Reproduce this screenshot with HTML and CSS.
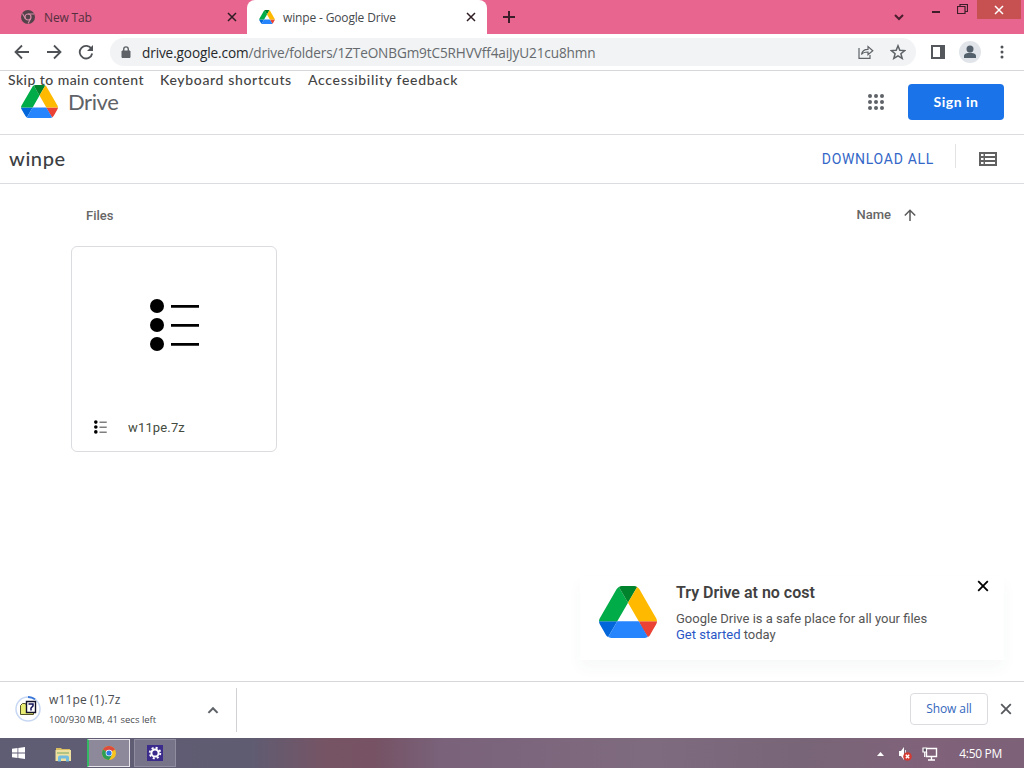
FILE: index.html
```
<!DOCTYPE html>
<html lang="en">
<head>
	<meta charset="UTF-8">
	<title>winpe - Google Drive</title>
	<link rel="stylesheet" href="styles.css">
</head>
<body>
	<svg class="defs" width="0" height="0">
		<symbol id="drive" viewBox="0 0 87.3 78">
			<path d="m6.6 66.85 3.85 6.65c.8 1.4 1.95 2.5 3.3 3.3l13.75-23.8h-27.5c0 1.55.4 3.1 1.2 4.5z" fill="#0066da"/>
			<path d="m43.65 25-13.75-23.8c-1.35.8-2.5 1.9-3.3 3.3l-25.4 44a9.06 9.06 0 0 0 -1.2 4.5h27.5z" fill="#00ac47"/>
			<path d="m73.55 76.8c1.35-.8 2.5-1.9 3.3-3.3l1.6-2.75 7.65-13.25c.8-1.4 1.2-2.95 1.2-4.5h-27.5l5.85 11.5z" fill="#ea4335"/>
			<path d="m43.65 25 13.75-23.8c-1.35-.8-2.9-1.2-4.5-1.2h-18.5c-1.6 0-3.15.45-4.5 1.2z" fill="#00832d"/>
			<path d="m59.8 53h-32.3l-13.75 23.8c1.35.8 2.9 1.2 4.5 1.2h50.8c1.6 0 3.15-.45 4.5-1.2z" fill="#2684fc"/>
			<path d="m73.4 26.5-12.7-22c-.8-1.4-1.95-2.5-3.3-3.3l-13.75 23.8 16.15 28h27.45c0-1.55-.4-3.1-1.2-4.5z" fill="#ffba00"/>
		</symbol>
		<symbol id="cross" viewBox="0 0 10 10">
			<path d="M1 1l8 8M9 1l-8 8" fill="none" stroke="currentColor" stroke-width="1.5"/>
		</symbol>
		<symbol id="list" viewBox="0 0 50 52">
			<circle cx="7" cy="7" r="7"/><circle cx="7" cy="26" r="7"/><circle cx="7" cy="45" r="7"/>
			<path d="M21 6h28v2.700H21zM21 25h28v2.700H21zM21 44h28v2.700H21z"/>
		</symbol>
	</svg>

	<div class="screen">
		<!-- tabs -->
		<div class="tabs">
			<div class="tab">
				<svg class="favicon" viewBox="0 0 14 14"><circle cx="7" cy="7" r="7" fill="#54424a"/><circle cx="7" cy="7" r="3" fill="#54424a" stroke="#d98aa6" stroke-width="1.200"/><path d="M7 4h6.300M4.300 8.500L1.500 3.500M9.700 8.500L7 13.500" stroke="#d98aa6" stroke-width="1.100"/></svg>
				<span class="tab-title">New Tab</span>
				<svg class="tab-close"><use href="#cross"/></svg>
			</div>
			<div class="tab active">
				<svg class="favicon"><use href="#drive"/></svg>
				<span class="tab-title">winpe - Google Drive</span>
				<svg class="tab-close"><use href="#cross"/></svg>
			</div>
			<svg class="plus" viewBox="0 0 12 12"><path d="M6 0v12M0 6h12" stroke="#3c1e2a" stroke-width="2"/></svg>
			<div class="win-btns">
				<svg class="win-down" viewBox="0 0 10 7"><path d="M1 1l4 4 4-4" fill="none" stroke="#4b1d2e" stroke-width="2"/></svg>
				<svg class="win-min" viewBox="0 0 8 2"><path d="M0 0h8v2H0z" fill="#3c1e2a"/></svg>
				<svg class="win-max" viewBox="0 0 11 10"><path d="M.5 2.500h7.500v7H.5zM3 2V.5h7.500V7.500H8.500" fill="none" stroke="#3c1e2a" stroke-width="1.200"/></svg>
				<div class="win-close"><svg width="10" height="10"><use href="#cross"/></svg></div>
			</div>
		</div>

		<!-- address bar -->
		<div class="toolbar">
			<svg class="nav" viewBox="0 0 16 16"><path d="M15 8H2M8 1.500L1.500 8 8 14.500"/></svg>
			<svg class="nav" viewBox="0 0 16 16"><path d="M1 8h13M8 1.500L14.500 8 8 14.500"/></svg>
			<svg class="nav" viewBox="0 0 16 16"><path d="M13.500 5A6.300 6.300 0 1 0 14.200 9.500"/><path d="M15 1v6H9z" class="fill"/></svg>
			<div class="omnibox">
				<svg class="lock" viewBox="0 0 10 12"><path d="M1 5h8v6.500H1z" fill="#5f6368" stroke="#5f6368"/><path d="M2.700 5V3.200a2.300 2.300 0 0 1 4.600 0V5" fill="none" stroke="#5f6368" stroke-width="1.400"/></svg>
				<span class="url"><b>drive.google.com</b>/drive/folders/1ZTeONBGm9tC5RHVVff4aiJyU21cu8hmn</span>
				<svg class="share" viewBox="0 0 16 14"><path d="M1 3v10.400h11V10M3.500 9.500C4 6 6.500 4.300 10 4.300V1.500l4.800 4.200L10 9.800V7C7 7 5 7.500 3.500 9.500z" fill="none" stroke="#5f6368" stroke-width="1.200"/></svg>
				<svg class="star" viewBox="0 0 16 16"><path d="M8 1.800l1.800 4.500 4.900.3-3.800 3.100 1.300 4.700L8 11.800l-4.200 2.600 1.300-4.700L1.300 6.600l4.900-.3z" fill="none" stroke="#5f6368" stroke-width="1.500"/></svg>
			</div>
			<svg class="panel" viewBox="0 0 14 14"><path d="M1 1h12v12H1z" fill="none" stroke="#54575b" stroke-width="2"/><path d="M9 1h4v12H9z" fill="#54575b"/></svg>
			<svg class="avatar" viewBox="0 0 22 22"><circle cx="11" cy="11" r="11" fill="#e1e5ea"/><circle cx="11" cy="8" r="3.500" fill="#54606b"/><path d="M5 17v-2c0-2 3-3.200 6-3.200s6 1.200 6 3.200v2z" fill="#54606b"/></svg>
			<svg class="kebab" viewBox="0 0 4 14"><circle cx="2" cy="2" r="1.500"/><circle cx="2" cy="7" r="1.500"/><circle cx="2" cy="12" r="1.500"/></svg>
		</div>

		<!-- drive page -->
		<div class="page">
			<div class="skip">
				<a class="skip-main">Skip to main content</a>
				<a class="skip-keys">Keyboard shortcuts</a>
				<a class="skip-feed">Accessibility feedback</a>
			</div>
			<div class="header">
				<svg class="logo"><use href="#drive"/></svg>
				<span class="brand">Drive</span>
				<svg class="apps" viewBox="0 0 16 16"><circle cx="2" cy="2" r="2"/><circle cx="8" cy="2" r="2"/><circle cx="14" cy="2" r="2"/><circle cx="2" cy="8" r="2"/><circle cx="8" cy="8" r="2"/><circle cx="14" cy="8" r="2"/><circle cx="2" cy="14" r="2"/><circle cx="8" cy="14" r="2"/><circle cx="14" cy="14" r="2"/></svg>
				<a class="signin">Sign in</a>
			</div>
			<div class="folder-bar">
				<span class="folder">winpe</span>
				<a class="download">DOWNLOAD ALL</a>
				<span class="divider"></span>
				<svg class="view" viewBox="0 0 18 14"><path d="M0 0h18v14H0z" fill="#616161"/><path d="M2 2h2.500v2H2zM6 2h10v2H6zM2 6h2.500v2H2zM6 6h10v2H6zM2 10h2.500v2H2zM6 10h10v2H6z" fill="#fff"/></svg>
			</div>
			<div class="sort-row">
				<span class="files">Files</span>
				<span class="name">Name</span>
				<svg class="up" viewBox="0 0 12 12"><path d="M6 12V1.500M.8 6.500L6 1.200l5.200 5.300" fill="none" stroke="#5a5a5a" stroke-width="1.500"/></svg>
			</div>
			<div class="card">
				<div class="thumb"><svg width="50" height="52"><use href="#list"/></svg></div>
				<div class="card-name">
					<svg width="13" height="14"><use href="#list"/></svg>
					<span>w11pe.7z</span>
				</div>
			</div>
			<div class="promo">
				<svg class="promo-logo"><use href="#drive"/></svg>
				<div class="promo-text">
					<h3>Try Drive at no cost</h3>
					<p>Google Drive is a safe place for all your files<br><a>Get started</a> today</p>
				</div>
				<svg class="promo-close"><use href="#cross"/></svg>
			</div>
		</div>

		<!-- download shelf -->
		<div class="shelf">
			<div class="item">
				<svg class="zip" viewBox="0 0 26 26"><circle cx="13" cy="13" r="12" fill="none" stroke="#c7d7f3" stroke-width="1.500"/><path d="M13 1a12 12 0 0 1 7 2.300" fill="none" stroke="#3976d8" stroke-width="2"/><path d="M5.500 9.500l2-2h3l1 2h7v9h-13z" fill="#e8ec72" stroke="#55552b"/><path d="M11.500 5.500h9v11h-9z" fill="#fff" stroke="#10102a" stroke-width="1.400"/><path d="M13.500 8h4.500v2l-2 2v2.500" fill="none" stroke="#10105a" stroke-width="1.500"/></svg>
				<div class="item-text">
					<div class="item-name">w11pe (1).7z</div>
					<div class="item-info">100/930 MB, 41 secs left</div>
				</div>
				<svg class="caret" viewBox="0 0 10 7"><path d="M1 6l4-4 4 4" fill="none" stroke="#5f6368" stroke-width="1.800"/></svg>
			</div>
			<a class="show-all">Show all</a>
			<svg class="shelf-close"><use href="#cross"/></svg>
		</div>

		<!-- windows taskbar -->
		<div class="taskbar">
			<svg class="start" viewBox="0 0 13 12"><path d="M0 1.700L5.500 1v4.600H0zM6.300.9L13 0v5.600H6.300zM0 6.400h5.500V11L0 10.300zM6.300 6.400H13V12l-6.700-.9z" fill="#fff"/></svg>
			<svg class="explorer" viewBox="0 0 17 16"><path d="M1 2h5l1 1h8v2H1z" fill="#d8bd62"/><path d="M.5 4h15.500v11H.5z" fill="#f0e0a0"/><path d="M2 7h12" stroke="#8ab06e" stroke-width="1.200"/><path d="M3 15.500v-4q0-2 2-2h7q2 0 2 2v4h-3v-3H6v3z" fill="#72bce0"/></svg>
			<div class="task chrome">
				<svg width="14" height="14" viewBox="0 0 14 14"><circle cx="7" cy="7" r="7" fill="#f9c31d"/><path d="M7 7L.94 3.500A7 7 0 0 1 13.060 3.500z" fill="#dd4b3e"/><path d="M7 7L.94 3.500A7 7 0 0 0 7 14l3-5z" fill="#2f9e55"/><circle cx="7" cy="7" r="3.300" fill="#fff"/><circle cx="7" cy="7" r="2.600" fill="#2c7be5"/></svg>
			</div>
			<div class="task">
				<svg width="16" height="16" viewBox="0 0 16 16"><path d="M0 0h16v16H0z" fill="#3b2c8c"/><circle cx="8" cy="8" r="3.600" fill="none" stroke="#fff" stroke-width="2"/><circle cx="8" cy="8" r="5.300" fill="none" stroke="#fff" stroke-width="1.800" stroke-dasharray="2.100 2.060"/></svg>
			</div>
			<div class="tray">
				<svg class="tray-up" viewBox="0 0 7 4"><path d="M0 4l3.500-4L7 4z" fill="#fff"/></svg>
				<svg class="sound" viewBox="0 0 14 14"><path d="M1 4h2l3-4v13L3 9H1z" fill="#fff"/><path d="M7.500 3v7" stroke="#ddd"/><circle cx="9.500" cy="9.500" r="4.300" fill="#d33a32"/><path d="M7.800 7.800l3.400 3.400M11.200 7.800l-3.400 3.400" stroke="#fff" stroke-width="1.400"/></svg>
				<svg class="network" viewBox="0 0 16 14"><path d="M5 1.500h9.500v8H4.500V5M9.500 9.500V13M6 13h7" fill="none" stroke="#fff" stroke-width="1.400"/><path d="M1 1h3.500v4H1zM2.700 5v5" fill="#564a5d" stroke="#fff" stroke-width="1.200"/></svg>
				<span class="clock">4:50 PM</span>
			</div>
		</div>
	</div>
</body>
</html>
```
FILE: styles.css
```
*{
	margin:0;
	padding:0;
	box-sizing:border-box;
}
body{
	background:#fff;
	font-family:"Open Sans",sans-serif;
	overflow:hidden;
}
svg{
	display:block;
	flex:none;
}
span,a{
	white-space:nowrap;
}
.defs{
	display:none;
}
.screen{
	width:1024px;
	height:768px;
	display:flex;
	flex-direction:column;
}

/* tabs */
.tabs{
	height:34px;
	background:#e7658f;
	display:flex;
}
.tab{
	width:247px;
	height:34px;
	padding:0 10px 0 20px;
	display:flex;
	align-items:center;
	background:#e7658f;
	color:#54303e;
}
.tab.active{
	width:240px;
	padding:0 11px 0 12px;
	background:#fff;
	border-radius:8px 8px 0 0;
	color:#45494d;
}
.favicon{
	width:16px;
	height:14px;
}
.tab-title{
	flex:1;
	margin-left:8px;
	font-size:12px;
	letter-spacing:-0.15px;
}
.tab-close{
	width:10px;
	height:10px;
	color:#2e1c23;
}
.plus{
	width:12px;
	height:12px;
	margin:11px 0 0 16px;
}
.win-btns{
	margin-left:auto;
	display:flex;
}
.win-down{
	width:10px;
	height:7px;
	margin:14px 28px 0 0;
}
.win-min{
	width:8px;
	height:2px;
	margin:11px 17px 0 0;
}
.win-max{
	width:11px;
	height:10px;
	margin:4px 9px 0 0;
}
.win-close{
	width:44px;
	height:19px;
	margin-right:3px;
	display:flex;
	align-items:center;
	justify-content:center;
	background:#c75050;
	color:#fff;
}

/* address bar */
.toolbar{
	height:37px;
	padding:0 20px 0 14px;
	display:flex;
	align-items:center;
	border-bottom:1px solid #d5d7da;
}
.nav{
	width:16px;
	height:16px;
	margin-right:16px;
	fill:none;
	stroke:#4f5256;
	stroke-width:1.8;
}
.nav .fill{
	fill:#4f5256;
	stroke:none;
}
.omnibox{
	width:806px;
	height:28px;
	margin-right:15px;
	padding:0 10px 0 11px;
	display:flex;
	align-items:center;
	background:#f1f3f4;
	border-radius:14px;
}
.lock{
	width:10px;
	height:12px;
}
.url{
	flex:1;
	margin-left:11px;
	font-size:13.6px;
	letter-spacing:-0.12px;
	color:#666a6e;
}
.url b{
	font-weight:400;
	color:#26282b;
}
.share{
	width:16px;
	height:14px;
}
.star{
	width:16px;
	height:16px;
	margin-left:16px;
}
.panel{
	width:14px;
	height:14px;
}
.avatar{
	width:22px;
	height:22px;
	margin-left:14px;
}
.kebab{
	width:4px;
	height:14px;
	margin-left:auto;
	fill:#4f5256;
}

/* drive page */
.page{
	position:relative;
	height:610px;
	overflow:hidden;
}
.skip{
	position:absolute;
	left:8px;
	top:0;
	display:flex;
	gap:16px;
	font:500 14px/18px Lato,sans-serif;
	color:#444;
}
.skip-main{
	width:136px;
	letter-spacing:0.45px;
}
.skip-keys{
	width:132px;
	letter-spacing:0.65px;
}
.skip-feed{
	letter-spacing:0.68px;
}
.header{
	height:64px;
	padding:0 20px 2px 21px;
	display:flex;
	align-items:center;
	border-bottom:1px solid #dadce0;
}
.logo{
	width:37px;
	height:33px;
}
.brand{
	margin-left:10px;
	font:22px/32px Lato,sans-serif;
	letter-spacing:-0.4px;
	color:#5f6368;
}
.apps{
	width:16px;
	height:16px;
	margin-left:auto;
	fill:#5f6368;
}
.signin{
	width:96px;
	height:36px;
	margin-left:24px;
	background:#1a73e8;
	border-radius:4px;
	font:700 14px/35px Lato,sans-serif;
	letter-spacing:0.5px;
	text-align:center;
	color:#fff;
}
.folder-bar{
	height:49px;
	padding:0 27px 0 9px;
	display:flex;
	align-items:center;
	border-bottom:1px solid #dadce0;
}
.folder{
	margin-top:-3px;
	font:500 20px/28px Lato,sans-serif;
	letter-spacing:0.6px;
	color:#3c4043;
}
.download{
	margin-left:auto;
	font:14px/20px Roboto,sans-serif;
	letter-spacing:0.7px;
	color:#3367c8;
}
.divider{
	width:1px;
	height:24px;
	margin:-6px 23px 0 21px;
	background:#e3e3e3;
}
.view{
	width:18px;
	height:14px;
}
.sort-row{
	height:62px;
	padding:0 108px 0 86px;
	display:flex;
	align-items:center;
	font:500 13px/20px Roboto,sans-serif;
	color:#666;
}
.files{
	margin-top:2px;
}
.name{
	margin-left:auto;
}
.up{
	width:12px;
	height:12px;
	margin-left:13px;
}
.card{
	width:206px;
	height:206px;
	margin-left:71px;
	border:1px solid #dadce0;
	border-radius:6px;
}
.thumb{
	height:156px;
	padding:52px 0 0 78px;
}
.card-name{
	height:48px;
	padding-left:22px;
	display:flex;
	align-items:center;
	font:13px/20px Roboto,sans-serif;
	color:#444c40;
}
.card-name span{
	margin:2px 0 0 21px;
	letter-spacing:0.15px;
}
.promo{
	position:absolute;
	left:580px;
	top:505px;
	width:424px;
	height:84px;
	padding:0 15px 0 19px;
	display:flex;
	background:#fff;
	box-shadow:0 8px 14px rgba(60,64,67,0.04);
}
.promo-logo{
	width:58px;
	height:52px;
	margin-top:10px;
}
.promo-text{
	margin-left:19px;
	padding-top:6px;
	font-family:Roboto,sans-serif;
}
.promo-text h3{
	font-size:16px;
	line-height:22px;
	font-weight:600;
	color:#414141;
}
.promo-text p{
	margin-top:7px;
	font-size:13px;
	line-height:16px;
	color:#555;
}
.promo-text a{
	color:#2a56c6;
}
.promo-close{
	width:12px;
	height:12px;
	margin:4px 0 0 auto;
	color:#000;
}

/* download shelf */
.shelf{
	height:57px;
	padding:0 12px 0 15px;
	display:flex;
	align-items:center;
	border-top:1px solid #d5d7da;
}
.item{
	width:222px;
	height:44px;
	display:flex;
	align-items:center;
	border-right:1px solid #d0d2d5;
}
.zip{
	width:26px;
	height:26px;
	margin-top:-2px;
}
.item-text{
	margin-left:8px;
	color:#4a4c50;
}
.item-name{
	font-size:12px;
	line-height:19px;
	letter-spacing:0.15px;
}
.item-info{
	font-size:9.5px;
	line-height:21px;
}
.caret{
	width:12px;
	height:8px;
	margin:0 17px 0 auto;
}
.show-all{
	width:78px;
	height:32px;
	margin:-2px 0 0 auto;
	border:1px solid #dadce0;
	border-radius:4px;
	font-size:12px;
	font-weight:500;
	line-height:30px;
	letter-spacing:-0.1px;
	text-align:center;
	color:#3467bd;
}
.shelf-close{
	width:12px;
	height:12px;
	margin:-2px 0 0 12px;
	color:#55585c;
}

/* taskbar */
.taskbar{
	height:30px;
	display:flex;
	align-items:center;
	background:linear-gradient(90deg,#5f5d74 0,#5f5c72 250px,#775464 330px,#765264 375px,#79627a 440px,#7f6b80 650px,#786577 800px,#80627a 930px,#7c6179 100%);
}
.start{
	width:13px;
	height:12px;
	margin-left:12px;
}
.explorer{
	width:17px;
	height:16px;
	margin:2px 15px 0 30px;
}
.task{
	width:42px;
	height:28px;
	display:flex;
	align-items:center;
	justify-content:center;
	background:#777389;
	border:1px solid #918da0;
}
.task.chrome{
	width:43px;
	margin-right:4px;
	background:#8d899a;
	border-color:#e6e4e8;
	border-left:2px solid #35b863;
}
.tray{
	margin-left:auto;
	padding-right:22px;
	display:flex;
	align-items:center;
}
.tray-up{
	width:7px;
	height:4px;
	margin:2px 14px 0 0;
}
.sound{
	width:14px;
	height:14px;
	margin-top:2px;
}
.network{
	width:16px;
	height:14px;
	margin:1px 21px 0 10px;
}
.clock{
	font-size:12px;
	letter-spacing:-0.3px;
	color:#fff;
}
```
